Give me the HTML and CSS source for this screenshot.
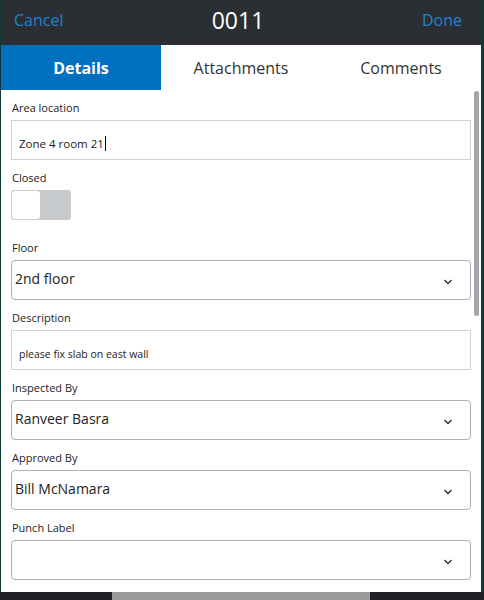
FILE: index.html
```html
<!DOCTYPE html>
<html>
<head>
<meta charset="utf-8">
<link rel="stylesheet" href="styles.css">
</head>
<body>
<div class="screen">
  <div class="dialog">
    <header class="topbar">
      <span class="link">Cancel</span>
      <span class="title">0011</span>
      <span class="link right">Done</span>
    </header>
    <nav class="tabs">
      <div class="tab active">Details</div>
      <div class="tab">Attachments</div>
      <div class="tab">Comments</div>
    </nav>
    <div class="body">
      <div class="form">
        <div class="field">
          <div class="label">Area location</div>
          <div class="input"><span>Zone 4 room 21</span><span class="caret"></span></div>
        </div>
        <div class="field">
          <div class="label">Closed</div>
          <div class="toggle"><div class="knob"></div></div>
        </div>
        <div class="field">
          <div class="label">Floor</div>
          <div class="select"><span>2nd floor</span><svg class="chev" viewBox="0 0 10 6" width="10" height="6"><path d="M1.5 1 L5 4.5 L8.5 1" fill="none" stroke="#333" stroke-width="1.5"/></svg></div>
        </div>
        <div class="field">
          <div class="label">Description</div>
          <div class="input desc"><span>please fix slab on east wall</span></div>
        </div>
        <div class="field">
          <div class="label">Inspected By</div>
          <div class="select"><span>Ranveer Basra</span><svg class="chev" viewBox="0 0 10 6" width="10" height="6"><path d="M1.5 1 L5 4.5 L8.5 1" fill="none" stroke="#333" stroke-width="1.5"/></svg></div>
        </div>
        <div class="field">
          <div class="label">Approved By</div>
          <div class="select"><span>Bill McNamara</span><svg class="chev" viewBox="0 0 10 6" width="10" height="6"><path d="M1.5 1 L5 4.5 L8.5 1" fill="none" stroke="#333" stroke-width="1.5"/></svg></div>
        </div>
        <div class="field">
          <div class="label">Punch Label</div>
          <div class="select"><span></span><svg class="chev" viewBox="0 0 10 6" width="10" height="6"><path d="M1.5 1 L5 4.5 L8.5 1" fill="none" stroke="#333" stroke-width="1.5"/></svg></div>
        </div>
      </div>
      <div class="scrolltrack"><div class="thumb"></div></div>
    </div>
  </div>
  <div class="bottombar"><div class="grey"></div></div>
</div>
</body>
</html>
```
FILE: styles.css
```css
html, body {
  margin: 0;
  padding: 0;
  background: #0e3a33;
}
body {
  font-family: "Open Sans", "Noto Sans", sans-serif;
  width: 484px;
  height: 600px;
  overflow: hidden;
}
.screen {
  display: flex;
  flex-direction: column;
  width: 484px;
  height: 600px;
}
.dialog {
  width: 480px;
  margin-left: 1px;
  height: 592px;
  background: #ffffff;
  display: flex;
  flex-direction: column;
}
.topbar {
  height: 45px;
  box-sizing: border-box;
  background: #2b2e33;
  display: grid;
  grid-template-columns: 1fr auto 1fr;
  align-items: center;
  padding: 0 19px 5px 13px;
}
.link {
  color: #1b84d2;
  font-size: 16px;
}
.link.right {
  justify-self: end;
}
.title {
  color: #ffffff;
  font-size: 23px;
}
.tabs {
  height: 45px;
  display: grid;
  grid-template-columns: 160px 160px 160px;
}
.tab {
  display: flex;
  align-items: center;
  justify-content: center;
  font-size: 16px;
  color: #333333;
}
.tab.active {
  background: #0070c0;
  color: #ffffff;
  font-weight: 700;
}
.body {
  flex: 1;
  display: flex;
  overflow: hidden;
}
.form {
  flex: 1;
  padding: 9px 0 0 10px;
  display: flex;
  flex-direction: column;
}
.field {
  display: flex;
  flex-direction: column;
  margin-bottom: 9px;
}
.label {
  font-size: 11px;
  color: #222;
  line-height: 16px;
  height: 16px;
  padding-top: 1px;
  margin-bottom: 4px;
  padding-left: 1px;
}
.input {
  width: 460px;
  height: 40px;
  box-sizing: border-box;
  border: 1px solid #cfd1d3;
  display: flex;
  align-items: center;
  padding: 6px 7px 0;
  font-size: 11.5px;
  color: #222;
}
.input.desc {
  font-size: 10.5px;
  padding-top: 8px;
}
.caret {
  display: inline-block;
  width: 1px;
  height: 15px;
  background: #000;
  margin-left: 1px;
}
.select {
  width: 460px;
  height: 40px;
  box-sizing: border-box;
  border: 1px solid #aeb2b6;
  border-radius: 4px;
  display: flex;
  align-items: center;
  justify-content: space-between;
  padding: 0 17px 4px 3px;
  font-size: 14px;
  color: #222;
}
.chev {
  margin-top: 8px;
}
.toggle {
  width: 60px;
  height: 30px;
  box-sizing: border-box;
  background: #c8cbce;
  border-radius: 3px;
  padding: 1px;
  margin-bottom: 10px;
}
.knob {
  width: 28px;
  height: 28px;
  background: #ffffff;
  border-radius: 3px;
}
.scrolltrack {
  width: 9px;
  display: flex;
  justify-content: center;
}
.thumb {
  width: 5px;
  height: 225px;
  background: #a3a7ab;
  border-radius: 3px;
  margin-top: 1px;
}
.bottombar {
  height: 8px;
  background: #1f2124;
  display: flex;
}
.grey {
  width: 258px;
  margin-left: 112px;
  background: #9b9b9b;
}
```
